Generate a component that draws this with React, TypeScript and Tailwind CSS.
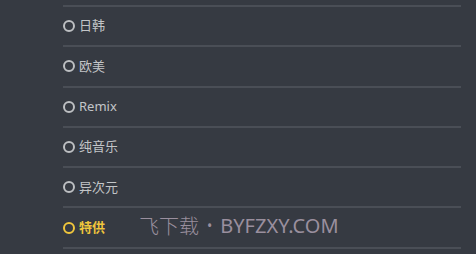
import React from "react";

const items = ["日韩", "欧美", "Remix", "纯音乐", "异次元", "特供"];
const active = "特供";

export default function App() {
  return (
    <div
      className="relative h-[254px] w-[476px] overflow-hidden bg-[#363a42]"
      style={{ fontFamily: '"Noto Sans", "Noto Sans CJK SC", sans-serif' }}
    >
      <div className="pt-[5px] pl-[63px] pr-[15px]">
        <div className="h-[2px] bg-[#4a4e56]" />
        {items.map(name => {
          const on = name === active;
          return (
            <div key={name} className="flex h-[40.3px] flex-col">
              <div className="flex flex-1 items-center gap-[4px]">
                <span
                  className={
                    on
                      ? "h-[12px] w-[12px] shrink-0 rounded-full border-2 border-[#f0c63c]"
                      : "h-[12px] w-[12px] shrink-0 rounded-full border-2 border-[#bdbfc2]"
                  }
                />
                <span className={on ? "text-[13px] font-bold text-[#f0c63c]" : "text-[13px] text-[#c3c5c8]"}>
                  {name}
                </span>
              </div>
              <div className="h-[2px] bg-[#4a4e56]" />
            </div>
          );
        })}
      </div>
      <div className="absolute left-[139px] top-[216px] flex items-center gap-[8px] text-[20px] leading-none text-[#9a8f9e]">
        <span style={{ fontFamily: '"Noto Sans CJK SC", sans-serif', fontWeight: 300 }}>飞下载</span>
        <span className="text-[14px]">•</span>
        <span>BYFZXY.COM</span>
      </div>
    </div>
  );
}
